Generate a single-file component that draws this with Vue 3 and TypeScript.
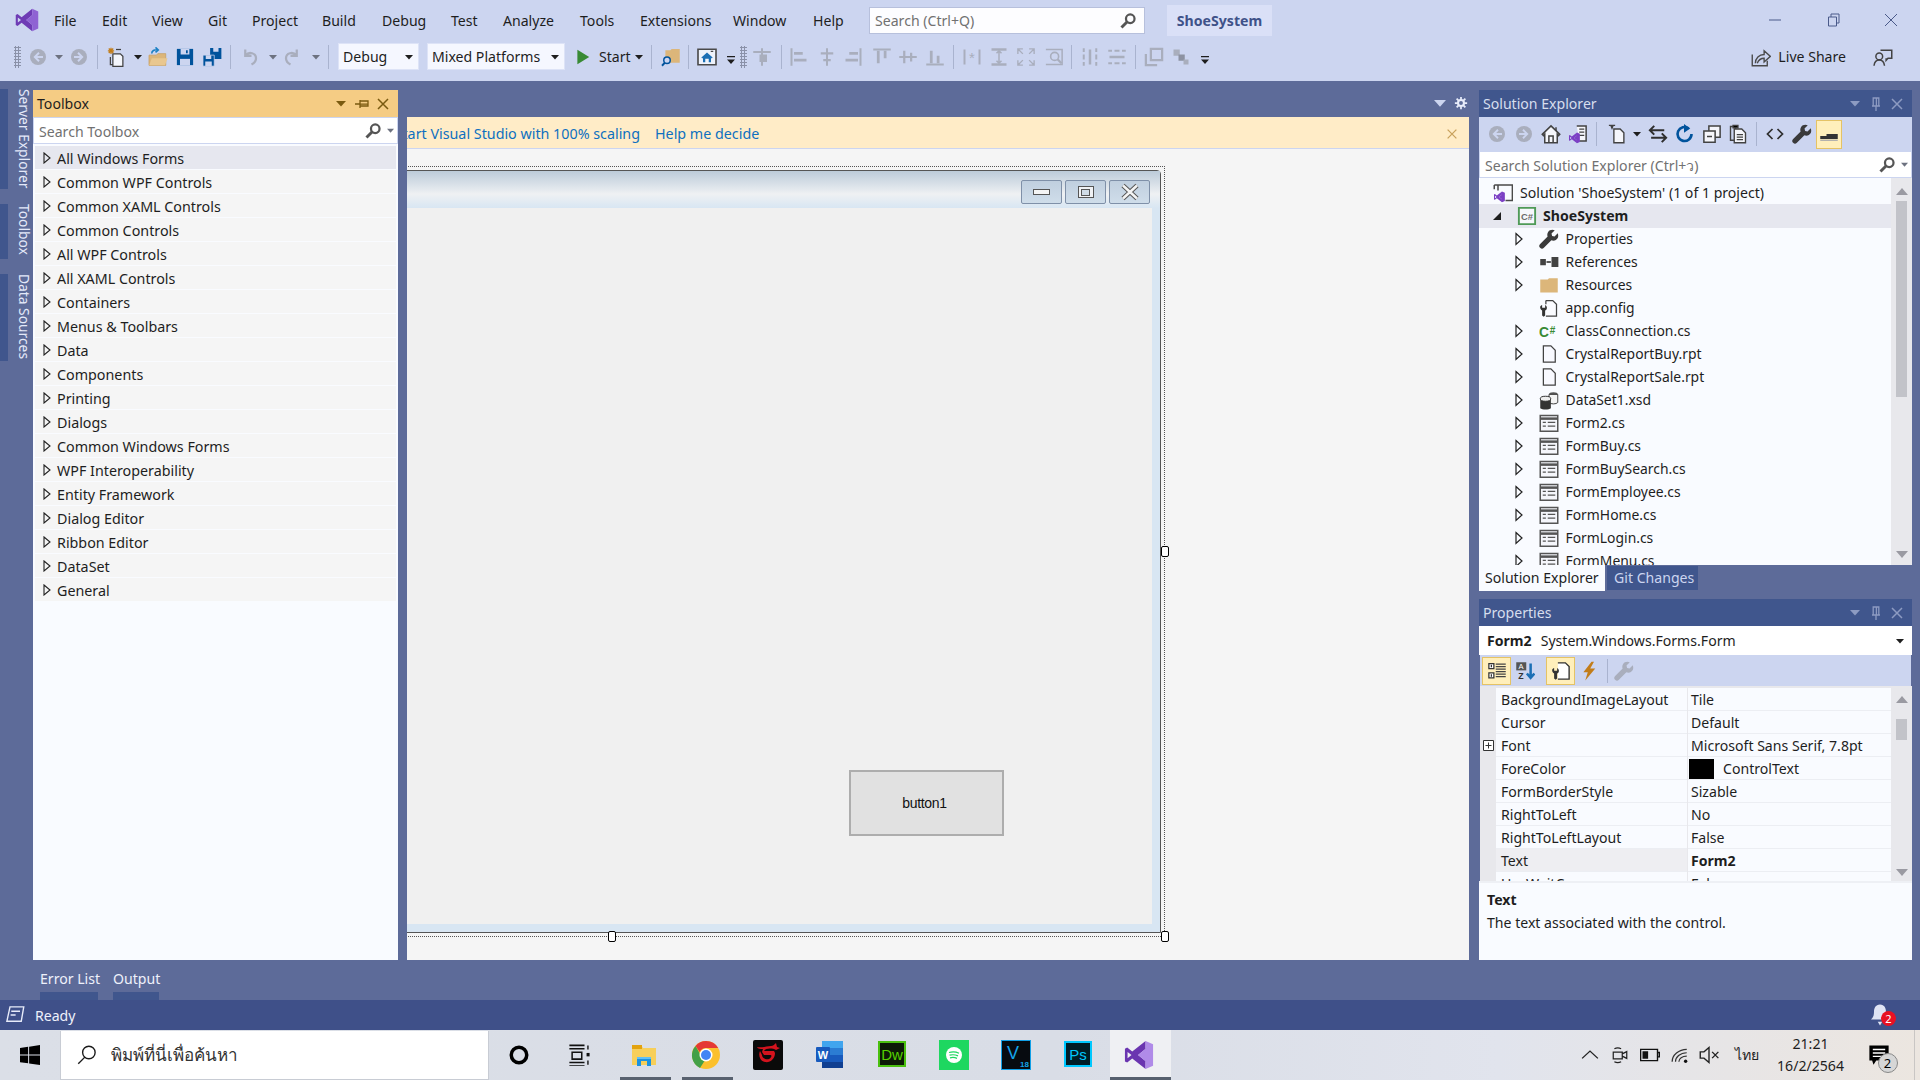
<script setup lang="ts">
type Item = { k: string; n?: string; t?: string; x: number; w: number; h?: number; vb?: string; ml?: number }

function place(start: number, arr: Item[]): Item[] {
  let cur = start
  return arr.map((it) => {
    const left = it.x - it.w / 2
    const out = { ...it, ml: left - cur }
    cur = left + it.w
    return out
  })
}
const ic = (n: string, x: number, w = 20): Item => ({ k: 'i', n, x, w, h: w, vb: '0 0 16 16' })
const caret = (x: number, dim = false): Item => ({ k: 'i', n: dim ? 'caretDim' : 'caret', x, w: 8, h: 8, vb: '0 0 8 8' })
const over = (x: number): Item => ({ k: 'i', n: 'overflow', x, w: 8, h: 14, vb: '0 0 8 14' })
const sep = (x: number): Item => ({ k: 's', x, w: 1 })

const G = '#a9aebd'
const D = '#424242'
const B = '#00539c'
const T = '#dcb67a'
const ln = (d: string, c = G, sw = 1.6) => `<path d="${d}" fill="none" stroke="${c}" stroke-width="${sw}"/>`

const vsMark = (l: string, r: string) =>
  `<path d="M4.4 6.1 1.7 4 .5 4.6v6.8l1.2.6 2.7-2.1 7.1 5.6V.5L4.4 6.1Zm-2.5.3L4 8 1.9 9.7V6.4Zm9.7-1.7v6.6L7.5 8l4.1-3.3Z" fill="${l}" fill-rule="evenodd"/><path d="M11.5.5 15.5 2.3v11.4l-4 1.8Zm0 4.2v6.6L7.5 8Z" fill="${r}" fill-rule="evenodd"/>`

const wrenchPath = 'M15 3.4 12.4 6 10.5 5.5 10 3.6 12.6 1c-2-.9-4.3-.3-5.400 1.5-.7 1.200-.7 2.400-.3 3.500L.9 12a2.100 2.100 0 0 0 3 3l6-6c2 .8 4.100 0 5.100-1.800.5-1.200.5-2.600 0-3.800Z'

const icons: Record<string, string> = {
  logo: vsMark('#6e3bb5', '#8f63d3'),
  caret: '<path d="M0 2h8L4 6.5Z" fill="#1e1e1e"/>',
  caretDim: `<path d="M0 2h8L4 6.5Z" fill="#6d7280"/>`,
  caretLight: '<path d="M0 2h8L4 6.5Z" fill="#ccd5f0"/>',
  overflow: '<path d="M0 6h8v1.300H0ZM0 9.500h8L4 14Z" fill="#1e1e1e"/>',
  back: `<circle cx="8" cy="8" r="6.400" fill="${G}"/><path d="M8.800 4.600 5.400 8l3.400 3.400M5.600 8H12" fill="none" stroke="#ccd5f0" stroke-width="1.500"/>`,
  fwd: `<circle cx="8" cy="8" r="6.400" fill="${G}"/><path d="M7.200 4.600 10.600 8l-3.400 3.400M10.400 8H4" fill="none" stroke="#ccd5f0" stroke-width="1.500"/>`,
  newp: `<path d="M5.500 5.500h6l2 2v8h-8Z" fill="#f4f6fc" stroke="${D}" stroke-width="1"/><path d="M3.500 8v6h2" fill="none" stroke="${D}"/><path d="M4 .5v5M1.500 3h5M2.200 1.200l3.600 3.600M5.800 1.200 2.200 4.800" stroke="#c27d1a" stroke-width="1"/><path d="M8 2h4" stroke="${D}"/>`,
  open: `<path d="M.8 6.500h6l1-1.200h6.400v9.400H.8Z" fill="${T}" stroke="#c79f5f" stroke-width=".6"/><path d="M1 14.500 3 9h12.600l-2 5.500Z" fill="#e9c78f"/><path d="M3 5.200C3 3 5 2 7.500 2.300M6 .3l2.200 2-2.200 2" fill="none" stroke="#1b80c4" stroke-width="1.300"/>`,
  save: `<path d="M1.500 1.500h13v13h-13Z" fill="${B}"/><path d="M4.500 1.500h7v4.500h-7Z" fill="#ccd5f0"/><path d="M8.800 2.500h1.400v2.500H8.800Z" fill="${B}"/><path d="M4 9.500h8v5H4Z" fill="#ccd5f0"/>`,
  saveall: `<path d="M6.500.8h9v8.800h-9Z" fill="${B}"/><path d="M9 .8h4.200v3H9Z" fill="#ccd5f0"/><path d="M.8 6.500h9v8.800h-9Z" fill="${B}" stroke="#ccd5f0" stroke-width=".6"/><path d="M3 6.600h4.400v3H3ZM2.600 11.500h5.200v3.700H2.600Z" fill="#ccd5f0"/>`,
  undo: ln('M5 2v5h5M5.400 6.600C8 3.400 13.600 4.800 13.600 9c0 2.400-1.600 4-3.600 5', G, 1.8),
  redo: ln('M11 2v5H6M10.600 6.600C8 3.400 2.400 4.800 2.400 9c0 2.400 1.600 4 3.600 5', G, 1.8),
  play: '<path d="M3 1.500 13.500 8 3 14.500Z" fill="#388a34"/>',
  find: `<path d="M3.500 2.500h4l1-1h6.500v11H3.500Z" fill="${T}"/><circle cx="4.800" cy="10.600" r="2.600" fill="#ccd5f0" stroke="${B}" stroke-width="1.200"/><path d="M3 12.600.8 15" stroke="${B}" stroke-width="1.500"/>`,
  homeb: `<path d="M.8 1.800h14.400v12.400H.8Z" fill="#eef2fb" stroke="#4a4a4a" stroke-width="1.300"/><path d="M3.500 8.400 8 4.400l4.500 4-.7.7-.6-.5v3.600H9.400V9.400H6.600v2.800H4.800V8.600l-.6.5Z" fill="#1b6fb5"/><path d="M11 3.500h2" stroke="#4a4a4a"/>`,
  act: ln('M8 1v14', G) + ln('M1 4h14', G) + `<path d="M6 6h6v6H6Z" fill="${G}"/>`,
  al1: ln('M2 1v14', G) + ln('M4 5h7M4 10.500h10', G, 2.2),
  al2: ln('M8 1v14', G) + ln('M3 5h10M5 10.500h6', G, 1.8),
  al3: ln('M14 1v14', G) + ln('M5 5h7M2 10.500h10', G, 2.2),
  al4: ln('M1 2h14', G) + ln('M5 3v10M10.500 3v6', G, 2.2),
  al5: ln('M1 8h14', G) + ln('M5 3v10M10.500 4.500v7', G, 1.8),
  al6: ln('M1 14h14', G) + ln('M5 3v10M10.500 7v6', G, 2.2),
  sz1: ln('M2 2v12M14 2v12', G) + `<text x="8" y="13" font-size="12" font-family="Liberation Sans" text-anchor="middle" fill="${G}">*</text>`,
  sz2: ln('M2 2h12M2 14h12', G, 2) + ln('M8 3v10M6 5l2-2 2 2M6 11l2 2 2-2', G, 1.2),
  sz3: ln('M1.500 5.500v-4h4M14.500 5.500v-4h-4M1.500 10.500v4h4M14.500 10.500v4h-4M2 2l3.500 3.500M14 2l-3.500 3.500M2 14l3.500-3.500M14 14l-3.500-3.500', G, 1.1),
  sz4: ln('M1.500 2h13v12h-13', G, 1.2) + `<circle cx="8.500" cy="7.500" r="3.200" fill="none" stroke="${G}" stroke-width="1.300"/>` + ln('M11 10l3 3', G, 1.8),
  hs: ln('M3 1v3M3 6v4M3 12v3M13 1v3M13 6v4M13 12v3', G, 1.6) + ln('M8 2v12', G, 2),
  vs: ln('M1 3h3M6 3h4M12 3h3M1 13h3M6 13h4M12 13h3', G, 1.6) + ln('M2 8h12', G, 2),
  front: `<path d="M5.500 1.500h9v9h-9Z" fill="none" stroke="${G}" stroke-width="1.800"/><path d="M1.500 5.500v9h9" fill="none" stroke="${G}" stroke-width="1.800"/>`,
  backz: `<path d="M2 2h5v5H2Z" fill="${G}"/><path d="M6 6h5v5H6Z" fill="#8d92a2"/><path d="M10 10h4v4h-4Z" fill="${G}"/>`,
  liveshare: ln('M1 6v9h12v-4', '#4a4a4a', 1.1) + ln('M3.500 13c0-4 3-7 7-7V3l5 4.500-5 4.500V9c-2.500 0-4.500 1.500-5.500 4', '#4a4a4a', 1.1),
  feedback: ln('M6 2.500h9v6.500h-3l-1.500 1.600V9', '#424242', 1.2) + `<circle cx="5" cy="7.500" r="2.700" fill="none" stroke="#424242" stroke-width="1.200"/>` + ln('M.8 15c.4-3 2-4.600 4.200-4.600S8.800 12 9.200 15', '#424242', 1.2),
  wmin: ln('M2 8h12', '#4a5a8a', 1),
  wres: ln('M3.500 5h8v9h-8ZM6 5V2h8v9h-2.500', '#4a5a8a', 1),
  wclose: ln('M2 2l12 12M14 2 2 14', '#4a5a8a', 1),
  gear: `<circle cx="8" cy="8" r="3.400" fill="none" stroke="#e8ecfa" stroke-width="2.400"/><path d="M8 1v3M8 12v3M1 8h3M12 8h3M3 3l2 2M11 11l2 2M13 3l-2 2M5 11l-2 2" stroke="#e8ecfa" stroke-width="2"/>`,
  dd: '<path d="M3 5h10L8 10.500Z" fill="currentColor"/>',
  pinh: '<path d="M1 8h5M6 4v8M6 5h8v5H6ZM6 8.200h8" fill="none" stroke="currentColor" stroke-width="1.300"/>',
  pinv: '<path d="M8 15v-5M4 10h8M5.200 2h5.600v8H5.200ZM8.400 2v8" fill="none" stroke="currentColor" stroke-width="1.300"/>',
  x: '<path d="M3 3l10 10M13 3 3 13" fill="none" stroke="currentColor" stroke-width="1.500"/>',
  search: '<circle cx="10" cy="6" r="3.800" fill="none" stroke="#555" stroke-width="2"/><path d="M7.300 8.700 2.200 13.800" stroke="#555" stroke-width="2.600"/>',
  home: `<path d="M8 1.500 15 8.300l-1 1-1-1V15H3V8.300l-1 1-1-1Z" fill="#f5f6fb" stroke="${D}" stroke-width="1.200"/><path d="M6.300 15V9.500h3.400V15" fill="none" stroke="${D}" stroke-width="1.200"/><path d="M12 2.500v3" stroke="${D}" stroke-width="1.200"/>`,
  vsdoc: `<path d="M7 1.500h7.500v12H9" fill="#f5f6fb" stroke="${D}" stroke-width="1.200"/><path d="M9 4h4M9 6.500h4M9 9h4" stroke="${D}"/><g transform="translate(.5 6.500) scale(.58)">${vsMark('#7b3fc4', '#7b3fc4')}</g>`,
  newdoc: `<path d="M5.500 4h5l3 3v8h-8Z" fill="#f5f6fb" stroke="${D}" stroke-width="1.100"/><path d="M1.500 1h5M3 1l1 2.500L5 1" stroke="${D}"/>`,
  sync: ln('M1.500 5H13M5 1.500 1.500 5 5 8.500', '#2f2f2f', 1.6) + ln('M2.500 11H14.500M11 7.500 14.500 11 11 14.500', '#2f2f2f', 1.6),
  refresh: ln('M11.700 3.500A5.600 5.600 0 1 0 14 8', '#00539c', 2.1) + '<path d="M8 0v7l5-3.400Z" fill="#00539c"/>',
  coll: `<path d="M5.500 1.500h9v9h-9Z" fill="#f5f6fb" stroke="${D}" stroke-width="1.200"/><path d="M1.500 5.500h9v9h-9Z" fill="#f5f6fb" stroke="${D}" stroke-width="1.200"/><path d="M4 10h4" stroke="${D}" stroke-width="1.200"/>`,
  copy: `<path d="M2 2h4v11H2Z" fill="none" stroke="${D}" stroke-width="1.100"/><path d="M5 4h6l3 3v8H5Z" fill="#f5f6fb" stroke="${D}" stroke-width="1.100"/><path d="M7 8.500h5M7 10.500h5M7 12.500h5M4 1h4v2H4Z" stroke="${D}"/>`,
  code: ln('M6 4 2 8l4 4M10 4l4 4-4 4', '#2f2f2f', 1.4),
  wrench: `<path d="${wrenchPath}" fill="#3a3a3a"/>`,
  wrenchDim: `<path d="${wrenchPath}" fill="${G}"/>`,
  minus: '<path d="M1 9.500h5V8h9v4H1Z" fill="#333"/><path d="M1 13h14" stroke="#aaa"/>',
  refs: '<path d="M1 5.500h4.500v5H1ZM10 4h5.500v8H10Z" fill="#424242"/><path d="M6 8h3.500" stroke="#424242" stroke-width="1.400"/>',
  folder: `<path d="M1 3.500h6l1-1h7v11.500H1Z" fill="${T}"/>`,
  config: `<path d="M5.500 2 H11l3 3v9.500H5.500" fill="#fafbff" stroke="${D}" stroke-width="1"/><path d="M5.500 2v3" stroke="${D}"/><path d="M2.500 5.500v2.200h2.400V5.500c1.300.7 1.700 2 1.300 3.200-.3.6-.8 1-1.300 1.200V14l-1.200 1-1.200-1V9.900C1.200 9.300.7 8 1 6.800c.2-.6.8-1.100 1.500-1.300Z" fill="#333"/>`,
  csfile: '<text x="0" y="12.500" font-size="11" font-weight="700" font-family="Liberation Sans" fill="#388a34">C</text><text x="8.500" y="10" font-size="8" font-weight="700" font-family="Liberation Sans" fill="#388a34">#</text>',
  doc: `<path d="M3.500 1.500h6l3.500 3.500v9.500H3.500Z" fill="#f8f9ff" stroke="${D}" stroke-width="1"/>`,
  data: '<ellipse cx="11.500" cy="3.500" rx="3.500" ry="1.800" fill="#555"/><path d="M8 3.500h7v6.500c-1 1.500-6 1.500-7 0Z" fill="#f4f4f4" stroke="#444" stroke-width=".8"/><path d="M1 7h8.500v7.500c-1.500 1.500-7 1.500-8.500 0Z" fill="#333"/><ellipse cx="5.200" cy="7" rx="4.200" ry="2" fill="#eee" stroke="#333" stroke-width=".8"/>',
  form: '<path d="M1 2h14v12.500H1Z" fill="#f5f6fb" stroke="#555" stroke-width="1.200"/><path d="M1 4.500h14" stroke="#555" stroke-width="2"/><path d="M3 7.500h2.500M3 10.500h2.500M7 7.500h6M7 10.500h6" stroke="#555" stroke-width="1.100"/>',
  project: '<path d="M1.500 1.500h13v13h-13Z" fill="#f6f7fb" stroke="#4f9a57" stroke-width="1.500"/><text x="3.200" y="11" font-size="7.500" font-weight="700" font-family="Liberation Sans" fill="#6a6a6a">C#</text>',
  solution: `<path d="M4 6V1.500h11.500V14H10M1 1.500h14.500M1 1.500V5" fill="none" stroke="#4a4a4a" stroke-width="1.200"/><g transform="translate(.5 6.500) scale(.58)">${vsMark('#7b3fc4', '#7b3fc4')}</g>`,
  pCat: '<path d="M1.500 2h4v4h-4ZM1.500 9.500h4v4h-4Z" fill="#fff" stroke="#333"/><path d="M3.500 3v2M3.500 10.500v2" stroke="#333"/><path d="M7 2.500h8M7 4.500h8M7 6.500h8M7 8.500h8M7 10.500h8M7 12.500h8" stroke="#444"/>',
  pAlpha: `<path d="M1 1h8v6.500H1Z" fill="#555"/><text x="2.700" y="6.500" font-size="6" font-family="Liberation Sans" fill="#fff">A</text><text x="2.500" y="14.500" font-size="7" font-weight="700" font-family="Liberation Sans" fill="#333">Z</text><path d="M12.500 2v11M9.500 10l3 3.500 3-3.500" fill="none" stroke="#1b6fb5" stroke-width="2"/>`,
  pProp: `<path d="M5.500 1.500h6l3 3v10h-9" fill="#fff" stroke="#333" stroke-width="1.100"/><path d="M2.500 5.500v2.200h2.400V5.500c1.300.7 1.700 2 1.300 3.200-.3.6-.8 1-1.300 1.200V14l-1.200 1-1.200-1V9.900C1.200 9.300.7 8 1 6.800c.2-.6.8-1.100 1.500-1.300Z" fill="#333"/>`,
  pBolt: '<path d="M10 .5 3.500 9H7l-2 6.500L13 6H9l3-5.500Z" fill="#c27d1a"/>',
  plus: '<path d="M.5.5h10v10H.500Z" fill="#fff" stroke="#333"/><path d="M2.500 5.500h6M5.500 2.500v6" stroke="#333"/>',
  up: '<path d="M1 9 7 2l6 7Z" fill="#9a9aa2"/>',
  down: '<path d="M1 2h12L7 9Z" fill="#9a9aa2"/>',
  readyIcon: ln('M4 1.500h11L13 13H1.500ZM5 5h7M4.500 8h4', '#e8ecfa', 1.1),
  bell: '<path d="M8 1c3 0 4 2.500 4 5 0 3 1 4 2 5H2c1-1 2-2 2-5 0-2.500 1-5 4-5Z" fill="#dfe4f4"/><path d="M6.500 12.500h3L8 15Z" fill="#dfe4f4"/>',
  win: '<path d="M0 2.300 6.500 1.400v6.200H0ZM7.300 1.300 16 0v7.600H7.300ZM0 8.400h6.500v6.200L0 13.700ZM7.300 8.400H16V16l-8.700-1.300Z" fill="#000"/>',
  mag: ln('M6.500 9.500 1 15', '#1a1a1a', 1.1) + '<circle cx="9.500" cy="6" r="5" fill="none" stroke="#1a1a1a" stroke-width="1.100"/>',
  cortana: '<circle cx="8" cy="8" r="6.200" fill="none" stroke="#000" stroke-width="2.800"/>',
  taskv: ln('M1 1h11M1 3.500h11M3 6h7v5H3ZM1 13.500h11M1 16h11', '#111', 1.1) + '<path d="M14.500 1v3M14.500 12v3" stroke="#111"/><path d="M13.500 6.500h2.200v2.500h-2.200Z" fill="#111"/>',
  chevron: ln('M1 11 8 4.500 15 11', '#222', 1.2),
  camera: ln('M2 5.500h8v6H2ZM10 7l4-2v6l-4-2M3 2.500c2-1 4-1 6 0M3 14c2 1 4 1 6 0', '#222', 1.1),
  battery: '<path d="M.5 3.500h13.500v9H.5ZM14 6h1.500v3.500H14" fill="none" stroke="#111" stroke-width="1.100"/><path d="M2 5h4.500v6H2Z" fill="#111"/>',
  wifi: ln('M1 14C1 8 7 3 14 3M4 14c0-4 4-8 10-8M7 14c0-3 3-5 7-5', '#333', 1.1) + '<circle cx="13" cy="13.500" r="1.500" fill="#111"/>',
  volume: ln('M1 5.500h3L8 2v12L4 10.500H1ZM10.500 5.500l5 5M15.500 5.500l-5 5', '#222', 1.1),
  action: '<path d="M1 1h14v11H6l-2 3-1-3H1Z" fill="#000"/><path d="M3.500 4h9M3.500 6.500h9M3.500 9h9" stroke="#fff"/>',
}

const appIcons: Record<string, string> = {
  explorer: '<path d="M3 5h9l2 3h13v17H3Z" fill="#f7cf5a"/><path d="M3 5h10v4H3Z" fill="#e3a30f"/><path d="M8 17h14v9h-4v-5h-6v5H8Z" fill="#1c92e0"/><path d="M8 17h14v2H8Z" fill="#60c0f5"/>',
  chrome: '<circle cx="15" cy="15" r="14" fill="#fbc02d"/><path d="M15 1a14 14 0 0 1 12.200 7H15a7 7 0 0 0-6.300 4L4.500 6A14 14 0 0 1 15 1Z" fill="#e53935"/><path d="M4.500 6l6 10.500a7 7 0 0 0 3 4.500L9 28A14 14 0 0 1 4.500 6Z" fill="#43a047"/><circle cx="15" cy="15" r="6.500" fill="#fff"/><circle cx="15" cy="15" r="5" fill="#4285f4"/>',
  garena: '<rect width="30" height="30" rx="2" fill="#0a0a0a"/><path d="M4 7c6 1 9-1 14-1 2 0 3-1 5-3l1 4 3 1-4 2c-4-2-10-2-12 1h10l1 2c0 6-5 10-10 9-5-1-7-7-5-11l2 4c0 3 4 5 7 4 2-1 3-3 2-4h-7l-2-3 1-3c-3 0-5 0-6-2Z" fill="#d3131d"/>',
  word: '<path d="M7 1h20a1 1 0 0 1 1 1v25a1 1 0 0 1-1 1H7Z" fill="#2b7cd3"/><path d="M7 1h21v7H7Z" fill="#41a5ee"/><path d="M7 15h21v7H7Z" fill="#185abd"/><path d="M7 22h21v6H7Z" fill="#103f91"/><rect x="1" y="7" width="14" height="15" rx="1" fill="#185abd"/><text x="8" y="19" font-size="11" font-weight="700" font-family="Liberation Sans" text-anchor="middle" fill="#fff">W</text>',
  dw: '<rect x="1" y="1" width="28" height="26" fill="#4ac00f"/><rect x="3" y="3" width="24" height="22" fill="#0c1a06"/><text x="15" y="20" font-size="15" font-family="Liberation Sans" text-anchor="middle" fill="#55d000">Dw</text>',
  spotify: '<rect width="30" height="30" fill="#1ed760"/><circle cx="15" cy="15" r="8" fill="#fff"/><path d="M10 12.500c3-1 7-.8 10 .7M10.500 15.200c3-.8 6-.5 8.500.7M11 17.800c2.500-.6 5-.4 7 .6" fill="none" stroke="#1ed760" stroke-width="1.200"/>',
  viz: '<rect x=".5" y=".5" width="29" height="29" fill="#070b10" stroke="#119fe6"/><text x="6" y="19" font-size="18" font-family="Liberation Sans" fill="#14a4ea">V</text><text x="19" y="27" font-size="8" font-weight="700" font-family="Liberation Sans" fill="#14a4ea">18</text>',
  ps: '<rect x="1" y="1" width="28" height="26" fill="#00c8ff"/><rect x="3" y="3" width="24" height="22" fill="#001d26"/><text x="15" y="20" font-size="15" font-family="Liberation Sans" text-anchor="middle" fill="#00c8ff">Ps</text>',
  vs: `<g transform="scale(1.875)">${vsMark('#6a35b0', '#b08be8')}</g>`,
}

const menu = [
  ['File', 48], ['Edit', 50], ['View', 56], ['Git', 44], ['Project', 70], ['Build', 60], ['Debug', 69],
  ['Test', 52], ['Analyze', 77], ['Tools', 60], ['Extensions', 93], ['Window', 80], ['Help', 56],
] as [string, number][]

const mainTools = place(0, [
  { k: 'g', x: 17, w: 7 },
  ic('back', 38), caret(59, true), ic('fwd', 79), sep(97.5),
  ic('newp', 116), caret(137.5), ic('open', 158), ic('save', 185), ic('saveall', 212), sep(230.5),
  ic('undo', 249), caret(273, true), ic('redo', 293), caret(316, true), sep(328.5),
  { k: 'c', t: 'Debug', x: 378.5, w: 81 }, { k: 'c', t: 'Mixed Platforms', x: 496, w: 138 },
  { ...ic('play', 583, 18) }, { k: 't', t: 'Start', x: 618, w: 38 }, caret(639), sep(651),
  ic('find', 671), sep(688), ic('homeb', 707), over(731), { k: 'g', x: 743, w: 7 }, ic('act', 762), sep(781),
  ic('al1', 799), ic('al2', 826.5), ic('al3', 853), ic('al4', 881.5), ic('al5', 908), ic('al6', 935), sep(953.5),
  ic('sz1', 972), ic('sz2', 999), ic('sz3', 1026), ic('sz4', 1053.5), sep(1071),
  ic('hs', 1090), ic('vs', 1117), sep(1135.5), ic('front', 1154), ic('backz', 1181), over(1205),
])

const seTools = place(1479, [
  ic('back', 1497), ic('fwd', 1524), ic('home', 1551), ic('vsdoc', 1578), sep(1596),
  ic('newdoc', 1617), caret(1637), ic('sync', 1657.5), ic('refresh', 1684), ic('coll', 1712), ic('copy', 1738), sep(1756),
  ic('code', 1775), ic('wrench', 1802), { k: 'a', n: 'minus', x: 1829, w: 26, h: 29 },
])

const propTools = place(1480, [
  { k: 'a', n: 'pCat', x: 1496.5, w: 29, h: 28 }, ic('pAlpha', 1525),
  { k: 'a', n: 'pProp', x: 1560.5, w: 29, h: 28 }, ic('pBolt', 1589), sep(1607), ic('wrenchDim', 1624),
])

const toolbox = ['All Windows Forms', 'Common WPF Controls', 'Common XAML Controls', 'Common Controls', 'All WPF Controls',
  'All XAML Controls', 'Containers', 'Menus & Toolbars', 'Data', 'Components', 'Printing', 'Dialogs', 'Common Windows Forms',
  'WPF Interoperability', 'Entity Framework', 'Dialog Editor', 'Ribbon Editor', 'DataSet', 'General']

const tree = [
  ['Properties', 'wrench', 1], ['References', 'refs', 1], ['Resources', 'folder', 1], ['app.config', 'config', 0],
  ['ClassConnection.cs', 'csfile', 1], ['CrystalReportBuy.rpt', 'doc', 1], ['CrystalReportSale.rpt', 'doc', 1],
  ['DataSet1.xsd', 'data', 1], ['Form2.cs', 'form', 1], ['FormBuy.cs', 'form', 1], ['FormBuySearch.cs', 'form', 1],
  ['FormEmployee.cs', 'form', 1], ['FormHome.cs', 'form', 1], ['FormLogin.cs', 'form', 1], ['FormMenu.cs', 'form', 1],
] as [string, string, number][]

const props = [
  ['BackgroundImageLayout', 'Tile'], ['Cursor', 'Default'], ['Font', 'Microsoft Sans Serif, 7.8pt'], ['ForeColor', 'ControlText'],
  ['FormBorderStyle', 'Sizable'], ['RightToLeft', 'No'], ['RightToLeftLayout', 'False'], ['Text', 'Form2'], ['UseWaitCursor', 'False'],
]

const apps = ['explorer', 'chrome', 'garena', 'word', 'dw', 'spotify', 'viz', 'ps', 'vs']
const running = new Set(['explorer', 'chrome', 'vs'])

const tray = place(1171, [
  ic('chevron', 1590, 18), ic('camera', 1620, 18), ic('battery', 1650, 20), ic('wifi', 1680, 18), ic('volume', 1709, 20),
  { k: 'lang', t: 'ไทย', x: 1747, w: 30 }, { k: 'clock', x: 1811, w: 72 }, { k: 'msg', n: 'action', x: 1879, w: 24 },
])
</script>

<template>
  <div class="app">
    <header class="menubar">
      <svg class="logo" width="24" height="24" viewBox="0 0 16 16" v-html="icons.logo"></svg>
      <nav class="menu">
        <span v-for="m in menu" :key="m[0]" class="menu-item" :style="{ width: m[1] + 'px' }">{{ m[0] }}</span>
      </nav>
      <div class="quick">
        <span>Search (Ctrl+Q)</span>
        <svg width="18" height="18" viewBox="0 0 16 16" v-html="icons.search"></svg>
      </div>
      <div class="sol-name">ShoeSystem</div>
      <div class="winctl">
        <span class="wbtn"><svg width="16" height="16" viewBox="0 0 16 16" v-html="icons.wmin"></svg></span>
        <span class="wbtn"><svg width="16" height="16" viewBox="0 0 16 16" v-html="icons.wres"></svg></span>
        <span class="wbtn"><svg width="16" height="16" viewBox="0 0 16 16" v-html="icons.wclose"></svg></span>
      </div>
    </header>

    <div class="toolbar">
      <template v-for="(it, i) in mainTools" :key="i">
        <i v-if="it.k === 'g'" class="grip" :style="{ marginLeft: it.ml + 'px' }"></i>
        <i v-else-if="it.k === 's'" class="sep" :style="{ marginLeft: it.ml + 'px' }"></i>
        <span v-else-if="it.k === 't'" class="tb-text" :style="{ marginLeft: it.ml + 'px', width: it.w + 'px' }">{{ it.t }}</span>
        <span v-else-if="it.k === 'c'" class="combo" :style="{ marginLeft: it.ml + 'px', width: it.w + 'px' }">
          <span>{{ it.t }}</span>
          <svg width="8" height="8" viewBox="0 0 8 8" v-html="icons.caret"></svg>
        </span>
        <svg v-else :style="{ marginLeft: it.ml + 'px' }" :width="it.w" :height="it.h" :viewBox="it.vb" v-html="icons[it.n!]"></svg>
      </template>
      <div class="live">
        <svg width="20" height="20" viewBox="0 0 16 16" v-html="icons.liveshare"></svg>
        <span>Live Share</span>
        <svg class="fb" width="20" height="20" viewBox="0 0 16 16" v-html="icons.feedback"></svg>
      </div>
    </div>

    <main class="workspace">
      <aside class="sidetabs">
        <div class="sidetab st1"><span>Server Explorer</span></div>
        <div class="sidetab st2"><span>Toolbox</span></div>
        <div class="sidetab st3"><span>Data Sources</span></div>
      </aside>

      <section class="toolbox">
        <div class="head head-active">
          <span class="head-title">Toolbox</span>
          <span class="head-ic"><svg width="16" height="16" viewBox="0 0 16 16" v-html="icons.dd"></svg></span>
          <span class="head-ic"><svg width="16" height="16" viewBox="0 0 16 16" v-html="icons.pinh"></svg></span>
          <span class="head-ic"><svg width="16" height="16" viewBox="0 0 16 16" v-html="icons.x"></svg></span>
        </div>
        <div class="searchbox">
          <span>Search Toolbox</span>
          <svg width="18" height="18" viewBox="0 0 16 16" v-html="icons.search"></svg>
          <svg class="sb-caret" width="7" height="7" viewBox="0 0 8 8" v-html="icons.caretDim"></svg>
        </div>
        <ul class="tb-list">
          <li v-for="(t, i) in toolbox" :key="t" class="tb-row" :class="{ first: i === 0 }">
            <svg class="exp-tb" width="8" height="12" viewBox="0 0 8 12"><path d="M1 1 7 6 1 11Z" fill="none" stroke="#222" stroke-width="1.1" /></svg>
            <span>{{ t }}</span>
          </li>
        </ul>
      </section>

      <section class="doc">
        <div class="doc-strip">
          <svg width="12" height="12" viewBox="0 0 8 8" v-html="icons.caretLight"></svg>
          <svg class="gear" width="14" height="14" viewBox="0 0 16 16" v-html="icons.gear"></svg>
        </div>
        <div class="info">
          <div class="info-clip"><a>Restart Visual Studio with 100% scaling</a></div>
          <a class="help">Help me decide</a>
          <svg class="info-x" width="14" height="14" viewBox="0 0 16 16" v-html="icons.x"></svg>
        </div>
        <div class="designer">
          <div class="selection">
            <div class="form">
              <div class="caption">
                <span class="capbtn"><i class="cap-min"></i></span>
                <span class="capbtn"><i class="cap-max"><i class="cap-max-in"></i></i></span>
                <span class="capbtn"><svg width="20" height="18" viewBox="0 0 20 18"><path d="M3 2.500l14 13M17 2.500 3 15.500" stroke="#555" stroke-width="4.500" /><path d="M3 2.500l14 13M17 2.500 3 15.500" stroke="#f4f4f4" stroke-width="2.500" /></svg></span>
              </div>
              <div class="client">
                <div class="winbtn">button1</div>
              </div>
            </div>
            <i class="handle h-right"></i>
            <i class="handle h-bottom"></i>
            <i class="handle h-corner"></i>
          </div>
        </div>
      </section>

      <div class="right">
        <section class="se">
          <div class="head">
            <span class="head-title">Solution Explorer</span>
            <span class="head-ic"><svg width="16" height="16" viewBox="0 0 16 16" v-html="icons.dd"></svg></span>
            <span class="head-ic"><svg width="16" height="16" viewBox="0 0 16 16" v-html="icons.pinv"></svg></span>
            <span class="head-ic"><svg width="16" height="16" viewBox="0 0 16 16" v-html="icons.x"></svg></span>
          </div>
          <div class="se-tools">
            <template v-for="(it, i) in seTools" :key="i">
              <i v-if="it.k === 's'" class="sep" :style="{ marginLeft: it.ml + 'px' }"></i>
              <span v-else-if="it.k === 'a'" class="activebtn" :style="{ marginLeft: it.ml + 'px', width: it.w + 'px', height: it.h + 'px' }">
                <svg width="20" height="20" viewBox="0 0 16 16" v-html="icons[it.n!]"></svg>
              </span>
              <svg v-else :style="{ marginLeft: it.ml + 'px' }" :width="it.w" :height="it.h" :viewBox="it.vb" v-html="icons[it.n!]"></svg>
            </template>
          </div>
          <div class="searchbox">
            <span>Search Solution Explorer (Ctrl+ว)</span>
            <svg width="18" height="18" viewBox="0 0 16 16" v-html="icons.search"></svg>
            <svg class="sb-caret" width="7" height="7" viewBox="0 0 8 8" v-html="icons.caretDim"></svg>
          </div>
          <div class="tree-wrap">
            <div class="tree">
              <div class="row sol">
                <svg width="20" height="20" viewBox="0 0 16 16" v-html="icons.solution"></svg>
                <span>Solution 'ShoeSystem' (1 of 1 project)</span>
              </div>
              <div class="row proj">
                <svg class="exp-open" width="10" height="10" viewBox="0 0 10 10"><path d="M9 1v8H1Z" fill="#1e1e1e" /></svg>
                <svg class="proj-ic" width="20" height="20" viewBox="0 0 16 16" v-html="icons.project"></svg>
                <b>ShoeSystem</b>
              </div>
              <div v-for="r in tree" :key="r[0]" class="row leaf">
                <svg v-if="r[2]" class="exp" width="8" height="14" viewBox="0 0 8 14"><path d="M1 1.500 7 7 1 12.500Z" fill="none" stroke="#222" stroke-width="1.200" /></svg>
                <i v-else class="exp-none"></i>
                <svg class="leaf-ic" width="20" height="20" viewBox="0 0 16 16" v-html="icons[r[1]]"></svg>
                <span>{{ r[0] }}</span>
              </div>
            </div>
            <div class="vscroll se-scroll">
              <svg width="14" height="11" viewBox="0 0 14 11" v-html="icons.up"></svg>
              <i class="thumb se-thumb"></i>
              <svg class="dn" width="14" height="11" viewBox="0 0 14 11" v-html="icons.down"></svg>
            </div>
          </div>
          <div class="se-tabs">
            <span class="tab-on">Solution Explorer</span>
            <span class="tab-off">Git Changes</span>
          </div>
        </section>

        <section class="props">
          <div class="head">
            <span class="head-title">Properties</span>
            <span class="head-ic"><svg width="16" height="16" viewBox="0 0 16 16" v-html="icons.dd"></svg></span>
            <span class="head-ic"><svg width="16" height="16" viewBox="0 0 16 16" v-html="icons.pinv"></svg></span>
            <span class="head-ic"><svg width="16" height="16" viewBox="0 0 16 16" v-html="icons.x"></svg></span>
          </div>
          <div class="obj">
            <b>Form2</b><span>System.Windows.Forms.Form</span>
            <svg width="8" height="8" viewBox="0 0 8 8" v-html="icons.caret"></svg>
          </div>
          <div class="p-tools">
            <template v-for="(it, i) in propTools" :key="i">
              <i v-if="it.k === 's'" class="sep" :style="{ marginLeft: it.ml + 'px' }"></i>
              <span v-else-if="it.k === 'a'" class="activebtn" :style="{ marginLeft: it.ml + 'px', width: it.w + 'px', height: it.h + 'px' }">
                <svg width="20" height="20" viewBox="0 0 16 16" v-html="icons[it.n!]"></svg>
              </span>
              <svg v-else :style="{ marginLeft: it.ml + 'px' }" :width="it.w" :height="it.h" :viewBox="it.vb" v-html="icons[it.n!]"></svg>
            </template>
          </div>
          <div class="grid-wrap">
            <div class="pgrid">
              <div v-for="p in props" :key="p[0]" class="prow" :class="{ sel: p[0] === 'Text' }">
                <span class="gut"><svg v-if="p[0] === 'Font'" width="11" height="11" viewBox="0 0 11 11" v-html="icons.plus"></svg></span>
                <span class="pname">{{ p[0] }}</span>
                <span class="pval">
                  <i v-if="p[0] === 'ForeColor'" class="swatch"></i>
                  <b v-if="p[0] === 'Text'">{{ p[1] }}</b>
                  <template v-else>{{ p[1] }}</template>
                </span>
              </div>
            </div>
            <div class="vscroll p-scroll">
              <svg width="14" height="11" viewBox="0 0 14 11" v-html="icons.up"></svg>
              <i class="thumb p-thumb"></i>
              <svg class="dn" width="14" height="11" viewBox="0 0 14 11" v-html="icons.down"></svg>
            </div>
          </div>
          <div class="desc">
            <b>Text</b>
            <span>The text associated with the control.</span>
          </div>
        </section>
      </div>
    </main>

    <div class="bottomtabs">
      <div class="btab btab1"><span>Error List</span><i></i></div>
      <div class="btab btab2"><span>Output</span><i></i></div>
    </div>

    <footer class="status">
      <svg width="20" height="20" viewBox="0 0 16 16" v-html="icons.readyIcon"></svg>
      <span class="ready">Ready</span>
      <div class="bell">
        <svg width="24" height="24" viewBox="0 0 16 16" v-html="icons.bell"></svg>
        <em>2</em>
      </div>
    </footer>

    <div class="taskbar">
      <span class="winbtn-os"><svg width="20" height="20" viewBox="0 0 16 16" v-html="icons.win"></svg></span>
      <div class="os-search">
        <svg width="20" height="20" viewBox="0 0 16 16" v-html="icons.mag"></svg>
        <span>พิมพ์ที่นี่เพื่อค้นหา</span>
      </div>
      <span class="os-slot"><svg width="20" height="20" viewBox="0 0 16 16" v-html="icons.cortana"></svg></span>
      <span class="os-slot"><svg width="22" height="22" viewBox="0 0 16 16" v-html="icons.taskv"></svg></span>
      <div class="apps">
        <span v-for="a in apps" :key="a" class="app-slot" :class="{ run: running.has(a), cur: a === 'vs' }">
          <svg width="30" height="30" viewBox="0 0 30 30" v-html="appIcons[a]"></svg>
        </span>
      </div>
      <template v-for="(it, i) in tray" :key="i">
        <span v-if="it.k === 'lang'" class="lang" :style="{ marginLeft: it.ml + 'px', width: it.w + 'px' }">{{ it.t }}</span>
        <span v-else-if="it.k === 'clock'" class="clock" :style="{ marginLeft: it.ml + 'px', width: it.w + 'px' }"><span>21:21</span><span>16/2/2564</span></span>
        <span v-else-if="it.k === 'msg'" class="msg" :style="{ marginLeft: it.ml + 'px', width: it.w + 'px' }">
          <svg width="22" height="22" viewBox="0 0 16 16" v-html="icons.action"></svg><em>2</em>
        </span>
        <svg v-else :style="{ marginLeft: it.ml + 'px' }" :width="it.w" :height="it.h" :viewBox="it.vb" v-html="icons[it.n!]"></svg>
      </template>
    </div>
  </div>
</template>

<style>
html, body { margin: 0; padding: 0; overflow: hidden; background: #5d6b99; }
</style>

<style scoped>
* { box-sizing: border-box; }
svg { flex: none; display: block; }
i, em { font-style: normal; }
.app {
  width: 1920px; height: 1080px; display: flex; flex-direction: column; overflow: hidden; position: relative;
  background: #5d6b99; color: #1e1e1e;
  font-family: "Noto Sans", "Open Sans", "DejaVu Sans", sans-serif; font-size: 14.1px; line-height: 20px;
}
.menubar { height: 40px; background: #ccd5f0; display: flex; align-items: center; flex: none; }
.logo { margin-left: 15px; margin-right: 15px; }
.menu { display: flex; padding-top: 1px; }
.menu-item { display: block; white-space: nowrap; }
.quick {
  width: 276px; height: 27px; margin-top: 1px; background: #fdfdff; border: 1px solid #b7c0dc; display: flex; align-items: center;
  justify-content: space-between; padding: 0 7px 0 5px; color: #717171;
}
.sol-name {
  width: 105px; height: 31px; margin-left: 22px; margin-top: 1px; background: #dae0f7; color: #3f5289; font-weight: 700;
  display: flex; align-items: center; justify-content: center;
}
.winctl { margin-left: auto; display: flex; }
.wbtn { width: 58px; height: 40px; display: flex; align-items: center; justify-content: center; }
.toolbar { height: 41px; background: #ccd5f0; padding-bottom: 8px; display: flex; align-items: center; flex: none; }
.grip {
  display: block; width: 7px; height: 22px; flex: none;
  background-image: radial-gradient(circle, #8a91a8 1px, transparent 1.2px); background-size: 3px 3px;
}
.sep { display: block; width: 1px; height: 24px; flex: none; background: #a9b3cf; }
.combo {
  height: 27px; flex: none; background: #f5f7ff; border: 1px solid #dde3f7; display: flex; align-items: center; justify-content: space-between;
  padding: 0 5px 0 4px;
}
.tb-text { flex: none; display: block; }
.live { margin-left: auto; display: flex; align-items: center; padding-right: 27px; gap: 7px; }
.fb { margin-left: 20px; }
.workspace { height: 879px; padding-top: 9px; display: flex; flex: none; }
.sidetabs { width: 33px; flex: none; margin-top: -1px; display: flex; flex-direction: column; gap: 15px; }
.sidetab { border-left: 8px solid #40568d; writing-mode: vertical-rl; color: #e4e9f9; padding-left: 1px; font-size: 13.8px; line-height: 18px; white-space: nowrap; }
.st1 { height: 100px; }
.st2 { height: 55px; }
.st3 { height: 87px; }
.toolbox { width: 365px; flex: none; background: #f9fbff; display: flex; flex-direction: column; }
.head { height: 27px; flex: none; background: #40568d; color: #d7deee; display: flex; align-items: center; padding: 0 4.5px 0 4px; }
.head-title { flex: 1; white-space: nowrap; }
.head-ic { width: 21px; display: flex; justify-content: center; color: #8d9bc2; }
.head-active { background: #f5cc84; color: #1e1e1e; }
.head-active .head-ic { color: #7a5a10; }
.searchbox {
  height: 27px; flex: none; background: #fff; border: 1px solid #ccd5f0; display: flex; align-items: center;
  padding: 0 3px 0 5px; color: #717171;
}
.searchbox span { flex: 1; white-space: nowrap; padding-top: 2px; }
.sb-caret { margin-left: 5px; }
.tb-list { list-style: none; margin: 2px 2px 0; padding: 0; }
.tb-row { height: 24px; border-bottom: 1px solid #f9fbff; background: #f5f5f5; display: flex; align-items: center; padding: 2px 0 0 8px; font-size: 14.3px; }
.tb-row.first { background: #e6e7ef; }
.exp-tb { margin-right: 6px; margin-top: -1px; }
.doc { width: 1062px; flex: none; margin-left: 9px; display: flex; flex-direction: column; }
.doc-strip { height: 27px; flex: none; display: flex; align-items: center; justify-content: flex-end; padding-bottom: 2px; }
.gear { margin-left: 8px; margin-right: 1px; }
.info { height: 32px; flex: none; background: #ffecc7; border-bottom: 1px solid #ccd5f0; display: flex; align-items: center; color: #0e70c0; padding-top: 2px; font-size: 14.3px; }
.info-clip { width: 233px; overflow: hidden; display: flex; justify-content: flex-end; white-space: nowrap; }
.info-clip a { flex: none; }
.help { margin-left: 15px; }
.info-x { margin-left: auto; margin-right: 10px; color: #c8a15c; }
.designer { flex: 1; background: #f5f5f5; padding-top: 17px; overflow: hidden; }
.selection {
  width: 858px; height: 771px; margin-left: -100px; padding: 3px; position: relative; border: 1px dotted #555;
}
.form { height: 100%; border: 1px solid #555; border-radius: 0 4px 0 0; background: #d8e6f3; display: flex; flex-direction: column; }
.caption {
  height: 37px; flex: none; display: flex; justify-content: flex-end; align-items: flex-start; gap: 3px; padding: 9px 10px 0 0;
  background: linear-gradient(180deg, #bccbd9 0, #e4e9ee 50%, #eff1f3 62%, #d8e6f3 100%);
}
.capbtn {
  width: 41px; height: 24px; border: 1px solid #7f90a8; border-radius: 2px; background: linear-gradient(180deg, #c0cfdf, #cfddea);
  display: flex; align-items: center; justify-content: center;
}
.cap-min { display: block; width: 17px; height: 6px; background: #f4f4f4; border: 1px solid #555; }
.cap-max { display: flex; align-items: center; justify-content: center; width: 16px; height: 12px; background: #f0f2f5; border: 1px solid #555; }
.cap-max-in { display: block; width: 9px; height: 7px; background: #cfdbe6; border: 1px solid #555; }
.client { flex: 1; margin: 0 8px 8px 8px; background: #f0f0f0; position: relative; }
.winbtn {
  position: absolute; right: 148px; bottom: 88px; width: 155px; height: 66px; background: #e1e1e1; border: 2px solid #adadad;
  display: flex; align-items: center; justify-content: center; font-family: "Liberation Sans", sans-serif; font-size: 14px; letter-spacing: -.3px; color: #111;
  padding-right: 4px;
}
.handle { position: absolute; width: 8px; height: 11px; background: #fff; border: 1.5px solid #000; border-radius: 2px; }
.h-right { right: -5px; top: 379px; }
.h-bottom { left: 300px; bottom: -6px; }
.h-corner { right: -5px; bottom: -6px; }
.right { width: 433px; flex: none; margin-left: 10px; display: flex; flex-direction: column; gap: 8px; }
.se { height: 501px; display: flex; flex-direction: column; }
.se-tools { height: 34px; flex: none; background: #ccd5f0; display: flex; align-items: center; }
.activebtn { display: flex; align-items: center; justify-content: center; background: #ffefbb; border: 1px solid #e5c365; flex: none; }
.tree-wrap { flex: 1; min-height: 0; display: flex; background: #f9fbff; overflow: hidden; }
.tree { flex: 1; padding-top: 3px; overflow: hidden; }
.row { height: 23px; display: flex; align-items: center; white-space: nowrap; }
.sol { padding-left: 14px; gap: 7px; }
.proj { background: #e6e7ef; padding-left: 13px; height: 24px; margin-bottom: -1px; }
.proj-ic { margin-left: 15px; margin-right: 6px; }
.exp-open { flex: none; }
.leaf { padding-left: 36px; font-size: 13.9px; }
.exp, .exp-none { width: 8px; flex: none; display: block; }
.leaf-ic { margin-left: 16px; margin-right: 6.5px; }
.vscroll { width: 21px; flex: none; background: #e8e8ec; display: flex; flex-direction: column; align-items: center; position: relative; }
.vscroll .dn { margin-top: auto; }
.thumb { display: block; width: 11px; background: #c2c3c9; flex: none; }
.se-scroll { padding: 8px 0 5px; }
.se-thumb { height: 196px; margin-top: 4px; }
.se-tabs { height: 26px; flex: none; display: flex; align-items: flex-start; gap: 2px; }
.tab-on { width: 126px; height: 26px; background: #f9fbff; padding-left: 6px; line-height: 26px; white-space: nowrap; }
.tab-off { width: 91px; height: 24px; margin-top: 1px; background: #40568d; color: #ccd5f0; padding-left: 7px; line-height: 24px; white-space: nowrap; }
.props { flex: 1; min-height: 0; display: flex; flex-direction: column; }
.obj { height: 29px; flex: none; background: #fff; display: flex; align-items: center; padding: 0 8px 0 8px; gap: 9px; white-space: nowrap; }
.obj svg { margin-left: auto; }
.p-tools { height: 31px; flex: none; background: #ccd5f0; display: flex; align-items: center; margin: 0 1px; }
.grid-wrap { height: 195px; flex: none; background: #e8e8ec; display: flex; overflow: hidden; padding-top: 2px; margin-left: 1px; }
.pgrid { flex: 1; overflow: hidden; }
.prow { height: 23px; display: flex; white-space: nowrap; }
.gut { width: 16px; flex: none; display: flex; align-items: center; justify-content: center; background: #e8e8ec; }
.pname { width: 191px; flex: none; background: #f9fbff; border-bottom: 1px solid #eceef3; padding: 1px 0 0 5px; line-height: 22px; }
.pval { flex: 1; margin-left: 1px; background: #f9fbff; border-bottom: 1px solid #eceef3; padding: 1px 0 0 3px; line-height: 22px; display: flex; align-items: center; }
.prow.sel .pname { background: #eeeef2; }
.swatch { width: 25px; height: 20px; background: #000; margin: 0 9px 0 -2px; flex: none; }
.p-scroll { padding: 6px 0 3px; }
.p-thumb { height: 21px; margin-top: 14px; }
.desc { flex: 1; background: #f9fbff; border-top: 2px solid #eef0f5; padding: 7px 8px; display: flex; flex-direction: column; gap: 3px; }
.bottomtabs { height: 40px; flex: none; display: flex; padding-left: 40px; gap: 15px; }
.btab { display: flex; flex-direction: column; color: #eef1fb; padding-top: 9px; }
.btab span { height: 23px; white-space: nowrap; }
.btab i { display: block; height: 8px; background: #40568d; }
.btab1 { width: 58px; }
.btab2 { width: 46px; }
.status { height: 30px; flex: none; background: #3f5089; color: #eef1fb; display: flex; align-items: center; padding-left: 5px; gap: 10px; position: relative; }
.ready { padding-top: 1px; }
.bell { margin-left: auto; margin-right: 28px; position: relative; }
.bell em {
  position: absolute; left: 13px; top: 8px; width: 15px; height: 15px; border-radius: 50%; background: #e81123; color: #fff; font-size: 11px;
  line-height: 15px; text-align: center;
}
.taskbar {
  height: 50px; flex: none; display: flex; align-items: center; position: relative;
  background: linear-gradient(90deg, #dbdfe7 0, #d9dde6 55%, #e1e4ed 78%, #ece6e0 100%);
}
.taskbar::after { content: ""; position: absolute; right: 5px; top: 0; bottom: 0; width: 1px; background: #c9c6c4; }
.winbtn-os { width: 60px; display: flex; justify-content: center; }
.os-search {
  width: 429px; height: 49px; margin-top: 1px; background: #fff; display: flex; align-items: center; padding-left: 16px; gap: 14px; font-size: 17px;
  border: 1px solid #c8ccd4; border-top: 0; color: #333;
}
.os-slot { width: 60px; display: flex; justify-content: center; }
.apps { display: flex; margin-left: 4.5px; height: 50px; }
.app-slot { width: 62px; display: flex; align-items: center; justify-content: center; position: relative; }
.app-slot svg { margin-right: 2px; }
.app-slot.run::after { content: ""; position: absolute; left: 6px; right: 5px; bottom: 0; height: 3px; background: #58616f; }
.app-slot.cur { background: #eff0f3; width: 61px; }
.app-slot.cur::after { left: 0; right: 0; }
.lang { flex: none; text-align: center; white-space: nowrap; }
.clock { flex: none; display: flex; flex-direction: column; align-items: center; line-height: 22px; white-space: nowrap; }
.msg { flex: none; position: relative; display: flex; justify-content: center; }
.msg em {
  position: absolute; left: 11px; top: 9px; width: 20px; height: 20px; border-radius: 50%; background: #d6d6d6; border: 1px solid #888; color: #000;
  font-size: 13px; line-height: 18px; text-align: center;
}
</style>
